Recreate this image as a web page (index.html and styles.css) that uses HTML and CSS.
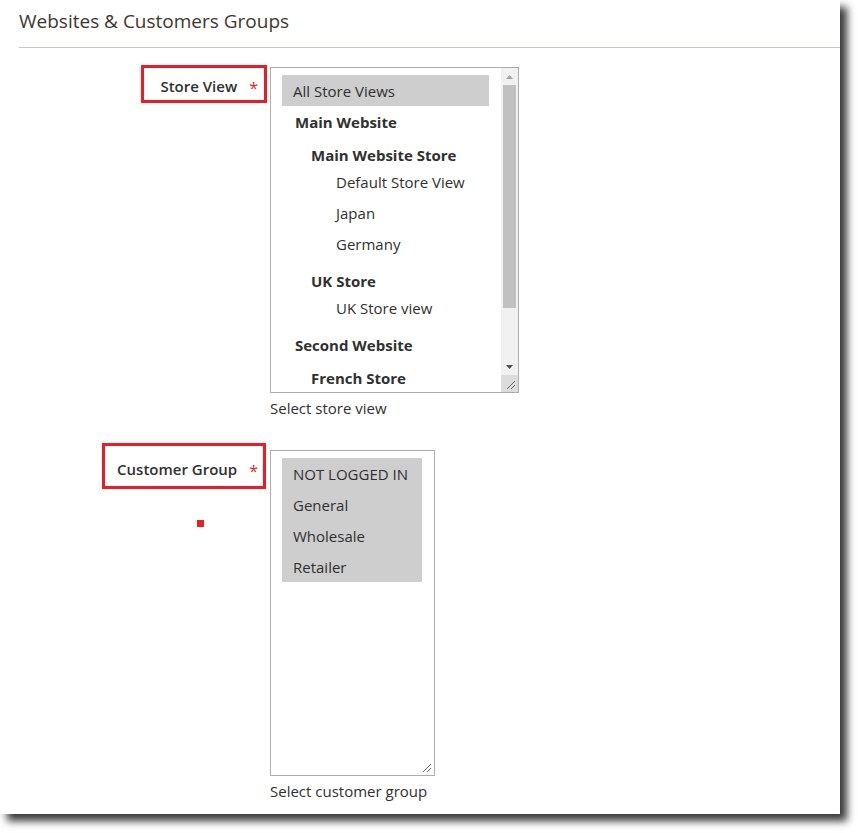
FILE: index.html
```html
<!DOCTYPE html>
<html lang="en">
<head>
    <meta charset="UTF-8">
    <title>Websites &amp; Customers Groups</title>
    <link rel="stylesheet" href="styles.css">
</head>
<body>
    <div class="panel">
        <div class="section-title">Websites &amp; Customers Groups</div>

        <div class="field">
            <div class="field-label"><span>Store View</span><span class="req">*</span></div>
            <div class="field-control">
                <div class="listbox listbox-store">
                    <div class="listbox-options">
                        <div class="opt is-selected">All Store Views</div>
                        <div class="optgroup is-first">Main Website</div>
                        <div class="optgroup level-2">Main Website Store</div>
                        <div class="opt level-3">Default Store View</div>
                        <div class="opt level-3">Japan</div>
                        <div class="opt level-3">Germany</div>
                        <div class="optgroup level-2">UK Store</div>
                        <div class="opt level-3">UK Store view</div>
                        <div class="optgroup">Second Website</div>
                        <div class="optgroup level-2">French Store</div>
                    </div>
                    <div class="scrollbar">
                        <div class="sb-btn">
                            <svg width="7" height="4" viewBox="0 0 7 4"><path d="M3.5 0 L7 4 L0 4 Z" fill="#a3a3a3"/></svg>
                        </div>
                        <div class="sb-track"><div class="sb-thumb"></div></div>
                        <div class="sb-btn">
                            <svg width="7" height="4" viewBox="0 0 7 4"><path d="M0 0 L7 0 L3.5 4 Z" fill="#505050"/></svg>
                        </div>
                        <div class="sb-corner">
                            <svg class="grip" width="10" height="10" viewBox="0 0 10 10"><path d="M9 1 L1 9 M9 5 L5 9" stroke="#6b6b6b" stroke-width="1"/></svg>
                        </div>
                    </div>
                </div>
                <div class="field-note">Select store view</div>
            </div>
            <span class="mark mark-store"></span>
        </div>

        <div class="field">
            <div class="field-label"><span>Customer Group</span><span class="req">*</span></div>
            <div class="field-control">
                <div class="listbox listbox-group">
                    <div class="listbox-options">
                        <div class="opt is-selected">NOT LOGGED IN</div>
                        <div class="opt is-selected">General</div>
                        <div class="opt is-selected">Wholesale</div>
                        <div class="opt is-selected">Retailer</div>
                    </div>
                    <svg class="grip grip-free" width="10" height="10" viewBox="0 0 10 10"><path d="M9 1 L1 9 M9 5 L5 9" stroke="#6b6b6b" stroke-width="1"/></svg>
                </div>
                <div class="field-note">Select customer group</div>
            </div>
            <span class="mark mark-group"></span>
            <span class="mark-dot"></span>
        </div>
    </div>
</body>
</html>
```

FILE: styles.css
```css
* {
    box-sizing: border-box;
}

body {
    margin: 0;
    padding-bottom: 19px;
    background: #ffffff;
    font-family: "Open Sans", "Liberation Sans", sans-serif;
    color: #303030;
}

.panel {
    width: 840px;
    background: #ffffff;
    padding: 7px 0 13px;
    box-shadow: 7px 7px 8px rgba(0, 0, 0, 0.78);
}

.section-title {
    margin: 0 0 19px 19px;
    padding-bottom: 12px;
    border-bottom: 1px solid #cac6bf;
    font-size: 19px;
    line-height: 28px;
    color: #41362f;
}

.field {
    position: relative;
    display: grid;
    grid-template-columns: 270px auto;
}

.field + .field {
    margin-top: 32px;
}

.field-label {
    display: flex;
    justify-content: flex-end;
    align-items: flex-start;
    padding: 9px 12px 0 0;
    font-size: 15px;
    line-height: 20px;
    font-weight: 600;
}

.req {
    display: block;
    margin: 4px 0 0 12px;
    font-size: 16px;
    line-height: 16px;
    font-weight: 500;
    color: #e22626;
}

.listbox {
    position: relative;
    display: flex;
    height: 326px;
    border: 1px solid #adadad;
    background: #ffffff;
    overflow: hidden;
}

.listbox-store {
    width: 249px;
}

.listbox-group {
    width: 165px;
}

.listbox-options {
    flex: 1;
    min-width: 0;
    padding: 7px 12px 0 11px;
    overflow: hidden;
    font-size: 15px;
    line-height: 20px;
}

.opt {
    padding: 5.5px 0 5.5px 11px;
    white-space: nowrap;
}

.opt.is-selected {
    background: #cecece;
}

.optgroup {
    padding: 11.5px 0 1.5px 13px;
    font-weight: 700;
    white-space: nowrap;
}

.optgroup.is-first {
    padding-top: 6px;
}

.optgroup.level-2 {
    padding-left: 29px;
}

.opt.level-3 {
    padding-left: 54px;
}

/* scrollbar drawn by hand */
.scrollbar {
    flex: none;
    width: 17px;
    display: flex;
    flex-direction: column;
    background: #f1f1f1;
}

.sb-btn {
    height: 17px;
    display: flex;
    align-items: center;
    justify-content: center;
}

.sb-track {
    flex: 1;
}

.sb-thumb {
    height: 223px;
    margin: 0 2px;
    background: #c1c1c1;
}

.sb-corner {
    height: 17px;
    display: flex;
    align-items: flex-end;
    justify-content: flex-end;
    padding: 0 2px 2px 0;
    background: #dcdcdc;
}

.grip {
    display: block;
}

.grip-free {
    position: absolute;
    right: 2px;
    bottom: 2px;
}

.field-note {
    margin-top: 5px;
    font-size: 15px;
    line-height: 20px;
}

/* red annotation marks */
.mark {
    position: absolute;
    border: 3px solid #ec1c24;
}

.mark-store {
    left: 141px;
    top: -2px;
    width: 126px;
    height: 38px;
}

.mark-group {
    left: 102px;
    top: -7px;
    width: 164px;
    height: 46px;
}

.mark-dot {
    position: absolute;
    left: 197px;
    top: 70px;
    width: 7px;
    height: 7px;
    background: #ec1c24;
}
```
